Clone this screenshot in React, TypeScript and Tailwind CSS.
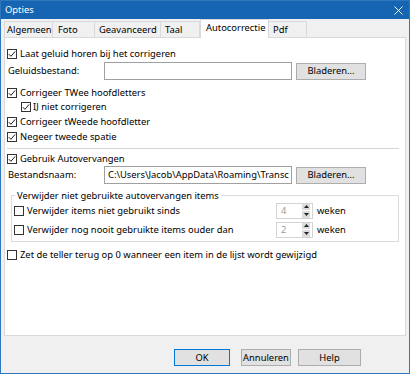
import React from "react";

function Cb({ checked }: { checked?: boolean }) {
  return (
    <span className="w-[10px] h-[10px] border border-[#333333] bg-white flex items-center justify-center shrink-0">
      {checked && (
        <svg width="8" height="8" viewBox="0 0 8 8">
          <path d="M0.8 4.2 L2.9 6.3 L7.2 1.4" stroke="#1a1a1a" strokeWidth="1" fill="none" />
        </svg>
      )}
    </span>
  );
}

function Btn({ label, w, primary }: { label: string; w: string; primary?: boolean }) {
  return (
    <div
      className={`${w} h-[17px] flex items-center justify-center bg-[#e1e1e1] border ${
        primary ? "border-[#0078d7]" : "border-[#adadad]"
      } text-black`}
    >
      {label}
    </div>
  );
}

function Spin({ value }: { value: string }) {
  return (
    <div className="w-[37px] h-[16px] border border-[#d4d4d4] bg-white flex items-center">
      <span className="flex-1 pl-[4px] text-[#9a9a9a]">{value}</span>
      <div className="w-[8px] h-[14px] flex flex-col gap-px mr-[2px]">
        <div className="flex-1 bg-[#dcdcdc] flex items-center justify-center">
          <svg width="5" height="3" viewBox="0 0 5 3"><path d="M0 3 L2.5 0 L5 3 Z" fill="#222" /></svg>
        </div>
        <div className="flex-1 bg-[#dcdcdc] flex items-center justify-center">
          <svg width="5" height="3" viewBox="0 0 5 3"><path d="M0 0 L2.5 3 L5 0 Z" fill="#222" /></svg>
        </div>
      </div>
    </div>
  );
}

export default function App() {
  const tabs = [
    { t: "Algemeen", w: "w-[49px]", pl: "pl-[2px]" },
    { t: "Foto", w: "w-[42px]", pl: "pl-[5px]" },
    { t: "Geavanceerd", w: "w-[66px]", pl: "pl-[4px]" },
    { t: "Taal", w: "w-[39px]", pl: "pl-[4px]" },
  ];
  return (
    <div className="w-[410px] h-[374px] flex flex-col border border-[#2f77bd] bg-[#f0f0f0] font-['Noto_Sans',sans-serif] text-[9.4px] leading-none text-black overflow-hidden">
      {/* title */}
      <div className="h-[18px] shrink-0 bg-[#1565b3] flex items-center pl-[4px] pr-[6px] text-white">
        <span className="flex-1">Opties</span>
        <svg width="9" height="9" viewBox="0 0 9 9">
          <path d="M0.5 0.5 L8.5 8.5 M8.5 0.5 L0.5 8.5" stroke="#ffffff" strokeWidth="1" />
        </svg>
      </div>
      {/* tabs */}
      <div className="h-[18px] shrink-0 flex items-end pl-[3px] relative z-10">
        {tabs.map((tb) => (
          <div
            key={tb.t}
            className={`${tb.w} ${tb.pl} h-[16px] flex items-center border-t border-r border-[#d9d9d9] first:border-l bg-[#f0f0f0] mb-0 whitespace-nowrap`}
          >
            {tb.t}
          </div>
        ))}
        <div className="w-[69px] h-[19px] -mb-px flex items-center pl-[5px] pb-[2px] bg-white border-t border-l border-r border-[#d9d9d9] whitespace-nowrap">
          Autocorrectie
        </div>
        <div className="w-[38px] pl-[4px] h-[16px] flex items-center border-t border-r border-[#d9d9d9] bg-[#f0f0f0]">
          Pdf
        </div>
      </div>
      {/* panel */}
      <div className="mx-[3px] h-[299px] shrink-0 bg-white border border-[#d9d9d9] pl-[2px] pr-[6px] flex flex-col">
        <div className="mt-[9px] h-[14px] flex items-center gap-[3px]">
          <Cb checked />
          <span>Laat geluid horen bij het corrigeren</span>
        </div>
        <div className="mt-[1px] h-[18px] flex items-center">
          <span className="w-[97px] pl-px">Geluidsbestand:</span>
          <div className="w-[188px] h-[18px] border border-[#a0a0a0] bg-white" />
          <div className="ml-[4px]">
            <Btn label="Bladeren..." w="w-[70px]" />
          </div>
        </div>
        <div className="mt-[5px] h-[15px] flex items-center gap-[3px]">
          <Cb checked />
          <span>Corrigeer TWee hoofdletters</span>
        </div>
        <div className="h-[14px] flex items-center gap-[2px] pl-[14px]">
          <Cb checked />
          <span>IJ niet corrigeren</span>
        </div>
        <div className="h-[15px] flex items-center gap-[3px]">
          <Cb checked />
          <span>Corrigeer tWeede hoofdletter</span>
        </div>
        <div className="h-[15px] flex items-center gap-[3px]">
          <Cb checked />
          <span>Negeer tweede spatie</span>
        </div>
        <div className="mt-[4px] h-px bg-[#d4d4d4]" />
        <div className="mt-[2px] h-[15px] flex items-center gap-[3px]">
          <Cb checked />
          <span>Gebruik Autovervangen</span>
        </div>
        <div className="h-[18px] flex items-center">
          <span className="w-[97px] pl-px">Bestandsnaam:</span>
          <div className="w-[188px] h-[18px] border border-[#a0a0a0] bg-white flex items-center pl-[3px] overflow-hidden whitespace-nowrap">
            C:\Users\Jacob\AppData\Roaming\Transc
          </div>
          <div className="ml-[4px]">
            <Btn label="Bladeren..." w="w-[70px]" />
          </div>
        </div>
        <fieldset className="mt-[5px] ml-[4px] border border-[#dcdcdc] pl-[2px] pb-[3px]">
          <legend className="ml-px px-[2px] h-[13px] leading-[13px]">Verwijder niet gebruikte autovervangen items</legend>
          <div className="h-[17px] flex items-center">
            <div className="w-[262px] flex items-center gap-[3px]">
              <Cb />
              <span>Verwijder items niet gebruikt sinds</span>
            </div>
            <Spin value="4" />
            <span className="ml-[4px]">weken</span>
          </div>
          <div className="mt-[2px] h-[17px] flex items-center">
            <div className="w-[262px] flex items-center gap-[3px]">
              <Cb />
              <span>Verwijder nog nooit gebruikte items ouder dan</span>
            </div>
            <Spin value="2" />
            <span className="ml-[4px]">weken</span>
          </div>
        </fieldset>
        <div className="mt-[6px] h-[14px] flex items-center gap-[3px]">
          <Cb />
          <span>Zet de teller terug op 0 wanneer een item in de lijst wordt gewijzigd</span>
        </div>
      </div>
      {/* footer */}
      <div className="flex-1 flex items-start justify-end pt-[13px] pr-[48px]">
        <Btn label="OK" w="w-[56px]" primary />
        <div className="ml-[11px]">
          <Btn label="Annuleren" w="w-[50px]" />
        </div>
        <div className="ml-[7px]">
          <Btn label="Help" w="w-[63px]" />
        </div>
      </div>
    </div>
  );
}
